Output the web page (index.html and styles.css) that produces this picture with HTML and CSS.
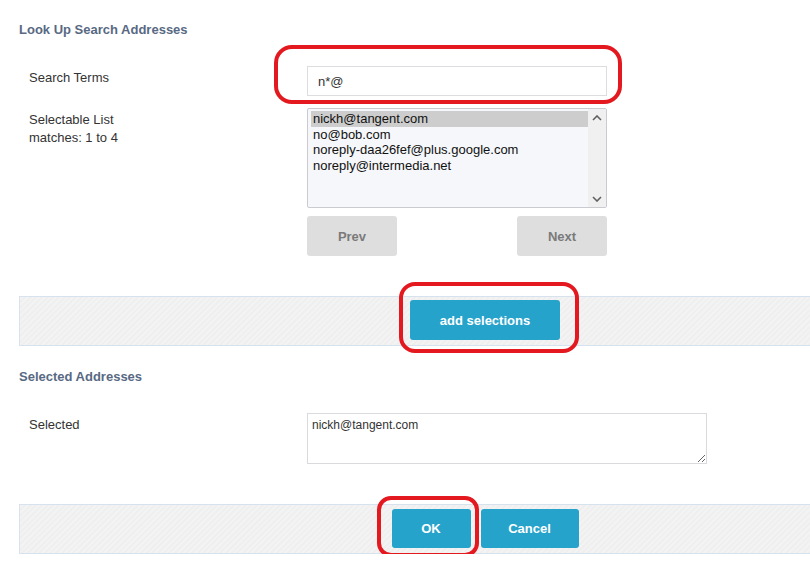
FILE: index.html
```html
<!DOCTYPE html>
<html lang="en">
<head>
  <meta charset="UTF-8">
  <title>Look Up Search Addresses</title>
  <link rel="stylesheet" href="styles.css">
</head>
<body>
  <div class="page">
    <h2 class="section-title">Look Up Search Addresses</h2>

    <div class="field-row row-search">
      <label class="field-label">Search Terms</label>
      <div class="field marked">
        <input class="text-input" type="text" value="n*@">
        <span class="mark mark-search"></span>
      </div>
    </div>

    <div class="field-row row-list">
      <label class="field-label">Selectable List<br>matches: 1 to 4</label>
      <div class="field">
        <div class="listbox">
          <ul class="list-items">
            <li class="selected">nickh@tangent.com</li>
            <li>no@bob.com</li>
            <li>noreply-daa26fef@plus.google.com</li>
            <li>noreply@intermedia.net</li>
          </ul>
          <div class="scrollbar">
            <svg width="10" height="6" viewBox="0 0 10 6"><path d="M1 5 L5 1 L9 5" fill="none" stroke="#606060" stroke-width="1.6"/></svg>
            <svg width="10" height="6" viewBox="0 0 10 6"><path d="M1 1 L5 5 L9 1" fill="none" stroke="#606060" stroke-width="1.6"/></svg>
          </div>
        </div>
        <div class="pager">
          <button class="btn-gray">Prev</button>
          <button class="btn-gray">Next</button>
        </div>
      </div>
    </div>

    <div class="action-bar bar-add">
      <div class="marked">
        <button class="btn-blue btn-add">add selections</button>
        <span class="mark mark-add"></span>
      </div>
    </div>

    <h2 class="section-title title-selected">Selected Addresses</h2>

    <div class="field-row row-selected">
      <label class="field-label">Selected</label>
      <div class="field field-wide">
        <textarea class="text-area">nickh@tangent.com</textarea>
      </div>
    </div>

    <div class="action-bar bar-footer">
      <div class="marked">
        <button class="btn-blue btn-ok">OK</button>
        <span class="mark mark-ok"></span>
      </div>
      <button class="btn-blue btn-cancel">Cancel</button>
    </div>
  </div>
</body>
</html>
```

FILE: styles.css
```css
body {
  margin: 0;
  background: #fff;
  font-family: "Liberation Sans", Arial, sans-serif;
  color: #333;
  overflow: hidden;
}
.page {
  padding: 22px 0 0 19px;
}
.section-title {
  margin: 0;
  font-size: 13px;
  line-height: 16px;
  font-weight: bold;
  color: #586983;
}
.field-row {
  display: grid;
  grid-template-columns: 288px 300px;
}
.field-label {
  padding: 3px 0 0 10px;
  font-size: 13px;
  line-height: 18px;
  color: #333;
}
.row-search {
  margin-top: 28px;
}
.row-list {
  margin-top: 12px;
}
.row-selected {
  margin-top: 28px;
  grid-template-columns: 288px 400px;
}
.field {
  display: flex;
  flex-direction: column;
}
.marked {
  position: relative;
}
.text-input {
  box-sizing: border-box;
  width: 300px;
  height: 30px;
  margin: 0;
  padding: 0 10px;
  border: 1px solid #dcdde0;
  background: #fff;
  font-family: inherit;
  font-size: 13px;
  color: #333;
}
.listbox {
  box-sizing: border-box;
  width: 300px;
  height: 100px;
  display: flex;
  border: 1px solid #c9cbd0;
  border-radius: 2px;
  background: #f5f7fa;
}
.list-items {
  flex: 1;
  margin: 0;
  padding: 2px 0 0 3px;
  list-style: none;
  font-size: 13px;
  line-height: 15.5px;
  color: #111;
}
.list-items li {
  padding-left: 2px;
}
.list-items .selected {
  background: #cdcdcd;
}
.scrollbar {
  width: 18px;
  background: #f0f0f0;
  display: flex;
  flex-direction: column;
  justify-content: space-between;
  align-items: center;
  padding: 6px 0 5px;
}
.pager {
  display: flex;
  justify-content: space-between;
  margin-top: 8px;
}
button {
  font-family: inherit;
  font-size: 13px;
  font-weight: bold;
  border: none;
  border-radius: 3px;
  cursor: pointer;
}
.btn-gray {
  width: 90px;
  height: 40px;
  background: #dedede;
  color: #7a7a7a;
}
.btn-blue {
  background: #25a3cb;
  color: #fff;
}
.action-bar {
  box-sizing: border-box;
  height: 50px;
  margin-top: 40px;
  padding-left: 140px;
  display: flex;
  justify-content: center;
  align-items: center;
  gap: 10px;
  border: 1px solid #d6e2ee;
  border-right: none;
  background: repeating-linear-gradient(-45deg, #efefef 0 2px, #f3f3f3 2px 4px);
}
.bar-add {
  padding-bottom: 2px;
}
.btn-add {
  display: block;
  width: 150px;
  height: 40px;
}
.title-selected {
  margin-top: 23px;
}
.field-wide {
  width: 400px;
}
.text-area {
  box-sizing: border-box;
  width: 400px;
  height: 51px;
  margin: 0;
  padding: 4px 4px;
  border: 1px solid #d9dadd;
  font-family: inherit;
  font-size: 12px;
  color: #333;
  resize: both;
}
.bar-footer {
  padding-bottom: 1px;
}
.btn-ok {
  display: block;
  width: 79px;
  height: 39px;
}
.btn-cancel {
  width: 98px;
  height: 39px;
}
/* red highlight rings drawn over the key controls */
.mark {
  position: absolute;
  border: 4px solid #e3191f;
  border-radius: 18px;
  pointer-events: none;
}
.mark-search {
  left: -33px;
  right: -15px;
  top: -21px;
  bottom: -8px;
}
.mark-add {
  left: -11px;
  right: -19px;
  top: -18px;
  bottom: -13px;
  border-radius: 16px;
}
.mark-ok {
  left: -15px;
  right: -8px;
  top: -13px;
  bottom: -9px;
  border-radius: 14px;
}
```
